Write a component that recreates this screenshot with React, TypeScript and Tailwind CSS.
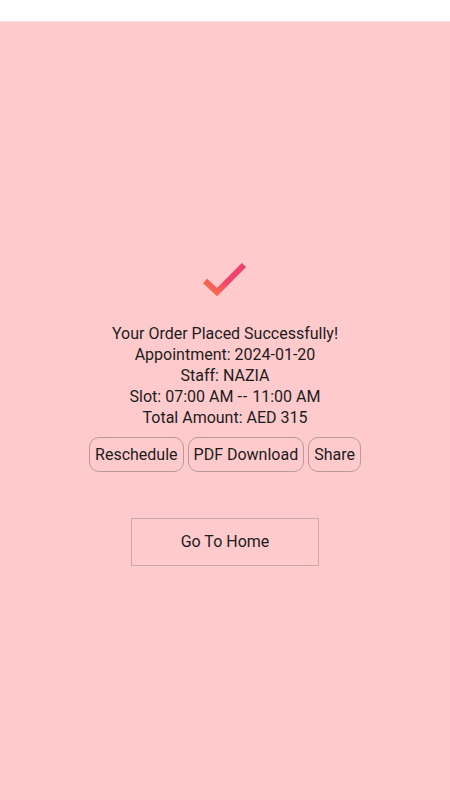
import React from 'react';

const lines: React.ReactNode[] = [
  'Your Order Placed Successfully!',
  'Appointment: 2024-01-20',
  'Staff: NAZIA',
  <>
    Slot: 07:00 AM <span className="tracking-[1px]">--</span> 11:00 AM
  </>,
  'Total Amount: AED 315',
];

const actions = ['Reschedule', 'PDF Download', 'Share'];

const CheckMark = () => (
  <svg width="50" height="40" viewBox="0 0 50 40">
    <defs>
      <linearGradient id="chk" x1="0" y1="1" x2="1" y2="0">
        <stop offset="0" stopColor="#f87545" />
        <stop offset="0.45" stopColor="#f4466a" />
        <stop offset="1" stopColor="#f0406c" />
      </linearGradient>
    </defs>
    <path d="M5 23 L17 34 L44 7" fill="none" stroke="url(#chk)" strokeWidth="6" strokeLinejoin="miter" />
  </svg>
);

const App = () => {
  return (
    <div className="w-[450px] h-[800px] bg-white flex flex-col" style={{ fontFamily: 'Roboto, "Noto Sans", sans-serif' }}>
      <div className="h-[22px] bg-white border-b border-[#f3e3e3]"></div>
      <main className="flex-1 bg-[#fecacc] pt-[2px] flex flex-col items-center justify-center text-[#1c1c1c] [font-variant-ligatures:none]">
        <CheckMark />
        <div className="mt-[25px] flex flex-col items-center text-[16px] leading-[21px]">
          {lines.map((line, i) => (
            <p key={i}>{line}</p>
          ))}
        </div>
        <div className="mt-[9px] flex gap-[4px]">
          {actions.map((a) => (
            <button key={a} className="h-[35px] px-[5px] border border-[#b79a9c] rounded-[10px] text-[16px]">
              {a}
            </button>
          ))}
        </div>
        <button className="mt-[46px] w-[188px] h-[48px] border border-[#c7a9aa] text-[16px]">
          Go To Home
        </button>
      </main>
    </div>
  );
};

export default App;
